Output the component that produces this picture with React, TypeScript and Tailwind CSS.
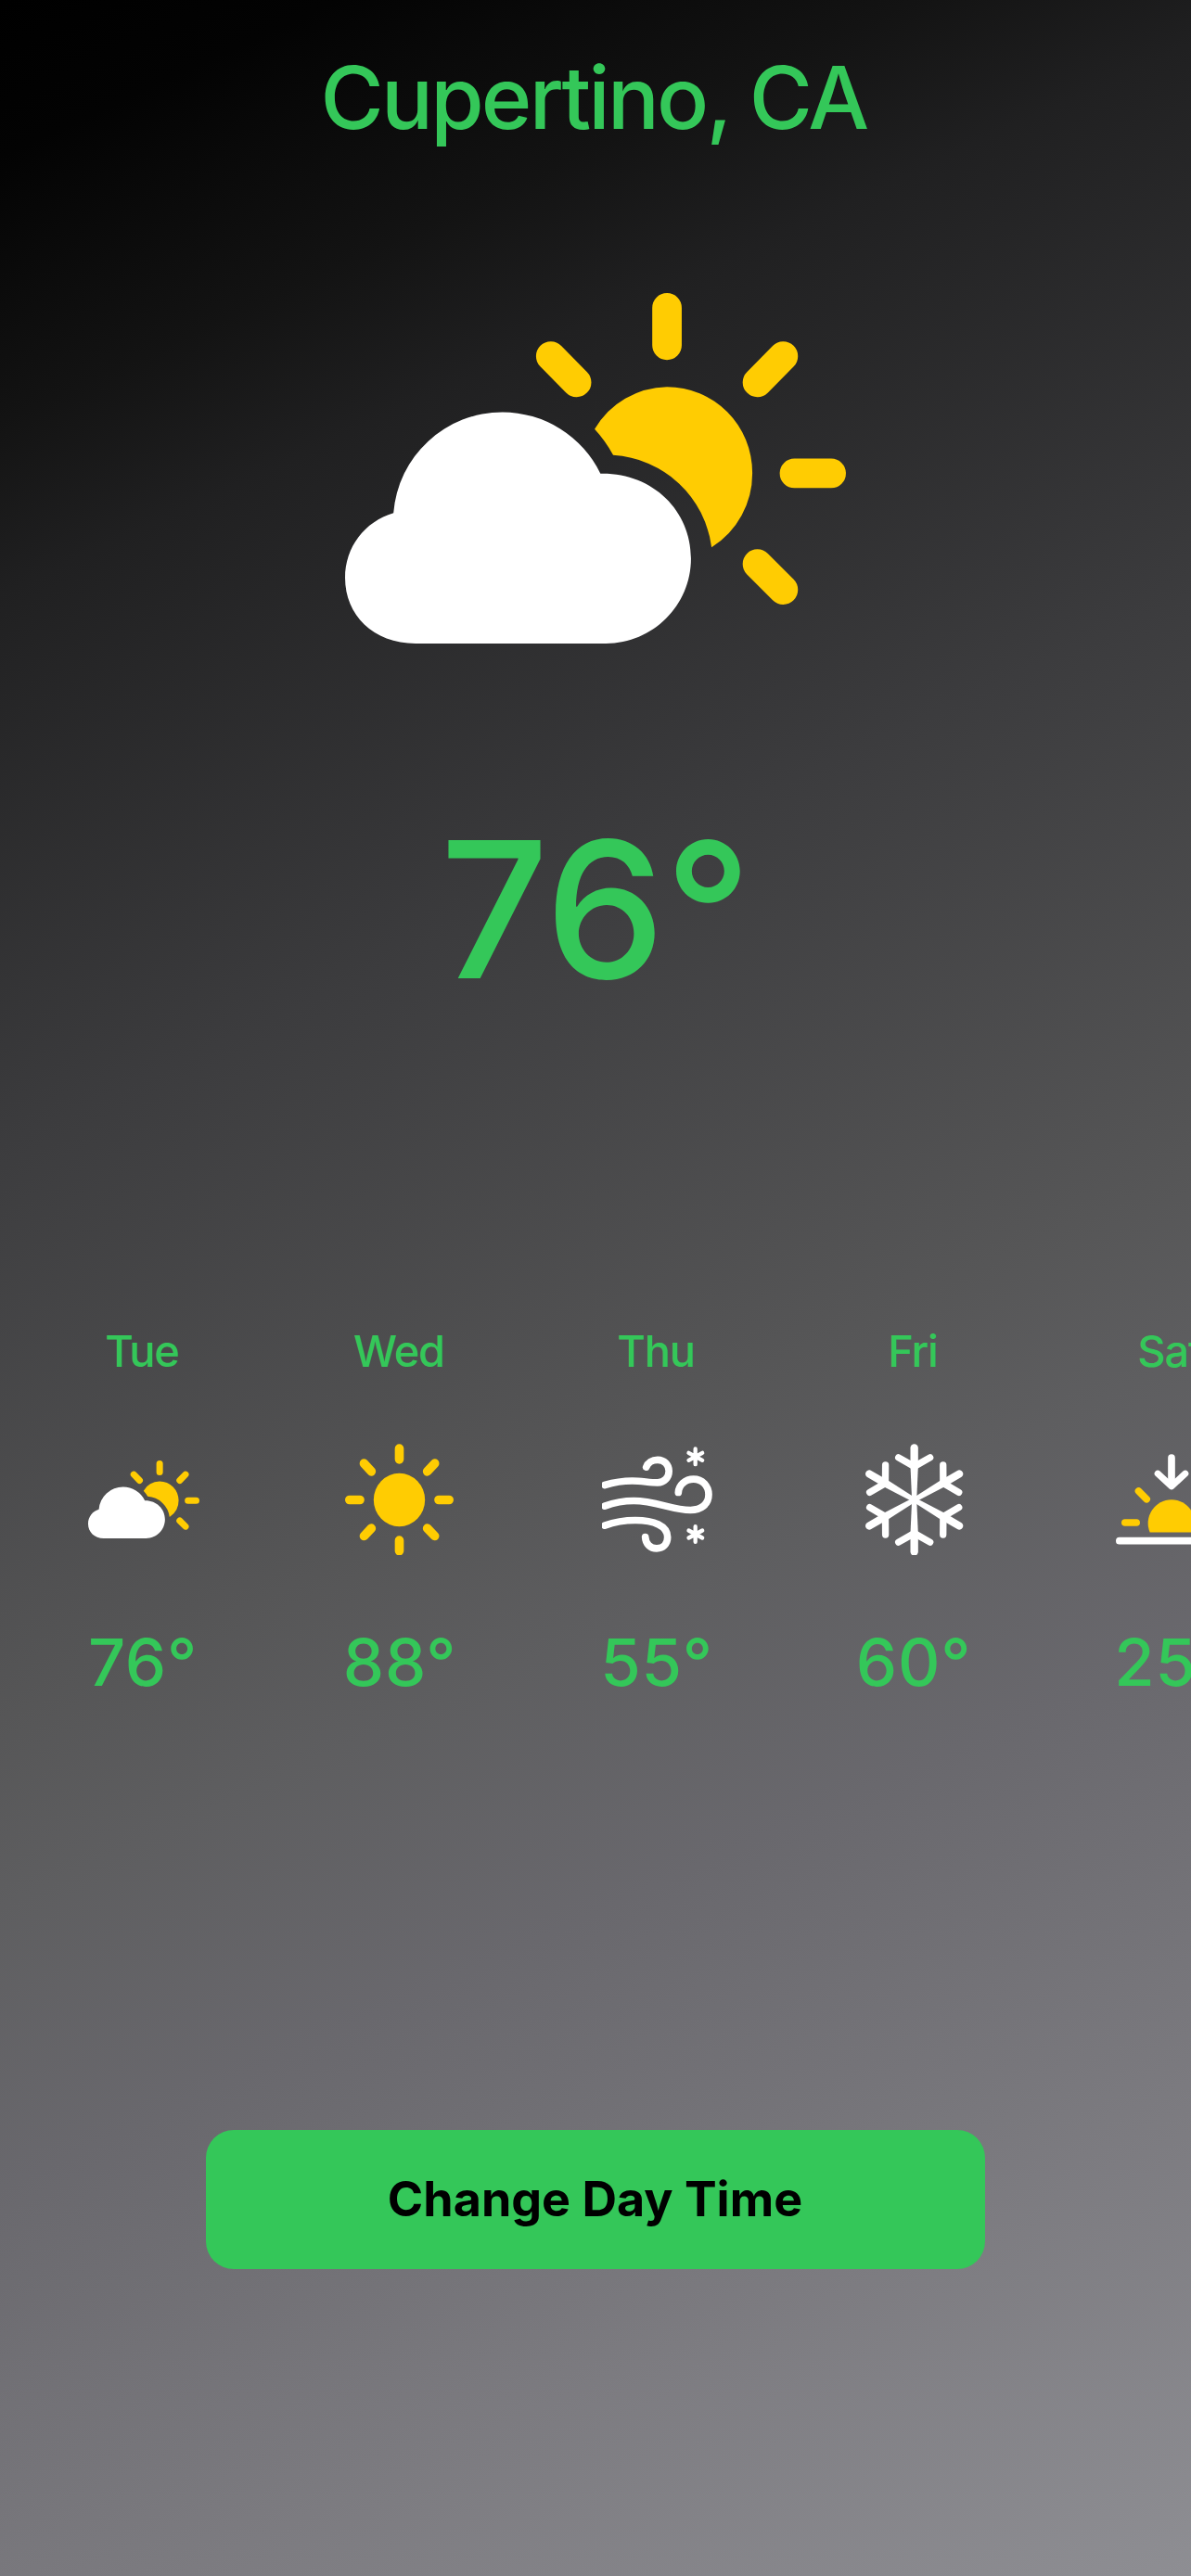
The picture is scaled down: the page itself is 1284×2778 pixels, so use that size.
import React from "react";

type Weather = "cloudSun" | "sun" | "windSnow" | "snow" | "sunset";

interface Day {
  name: string;
  weather: Weather;
  temperature: number;
}

const days: Day[] = [
  { name: "Tue", weather: "cloudSun", temperature: 76 },
  { name: "Wed", weather: "sun", temperature: 88 },
  { name: "Thu", weather: "windSnow", temperature: 55 },
  { name: "Fri", weather: "snow", temperature: 60 },
  { name: "Sat", weather: "sunset", temperature: 25 },
];

function CloudSunIcon({ className }: { className: string }) {
  return (
    <svg viewBox="21.8 15.7 540.5 378.4" className={className}>
      <g stroke="#ffcc02" strokeWidth="31.8" strokeLinecap="round">
        <path d="M369.2 31.6V72.1M506.8 210.3H546.4M494.6 83.9L466.8 112.1M243.8 83.9L271.6 112.1M466.8 308.2L494.6 336.1" />
      </g>
      <path
        fill="#ffcc02"
        d="M291.1 162.7A92.3 92.3 0 0 1 369.2 117A92.1 92.7 0 0 1 461.3 209.7A94 94 0 0 1 417.3 290.3A114 114 0 0 0 311.1 190.7A140 140 0 0 0 291.1 162.7Z"
      />
      <path
        fill="#fff"
        d="M98 394C52 394 21.8 363 21.8 323.3C21.8 290 43 262.5 74 253.3A118 118 0 0 1 191.6 144.3A118 118 0 0 1 297.4 210.7C353 209.5 395.1 250 395.1 302.3C395.1 353 354 394 303.4 394Z"
      />
    </svg>
  );
}

function SunIcon({ className }: { className: string }) {
  return (
    <svg viewBox="936 442.5 360 360" className={className}>
      <ellipse cx="1111.5" cy="624" rx="83" ry="86" fill="#ffcc02" />
      <path
        stroke="#ffcc02"
        strokeWidth="29"
        strokeLinecap="round"
        d="M1111.5 458V493M1111.5 755V789M950.5 624H984M1239 624H1272.5M997.5 506L1021 532M1226 506L1202 532M997.5 741L1021 716M1226 741L1202 716"
      />
    </svg>
  );
}

function WindSnowIcon({ className }: { className: string }) {
  return (
    <svg viewBox="57 52.5 360 360" className={className} fill="none" stroke="#fff" strokeLinecap="round">
      <g strokeWidth="23">
        <path d="M66 186C96 177 122 172.5 155 172.5C185 172.5 210 178 237 178C258 178 273.5 162 273.5 141C273.5 120 258 104.5 237 104.5C219 104.5 205 114 200 128" />
        <path d="M66 254C96 243 125 237 160 237C230 237 285 267 343 267C378 267 402 248 402 217C402 188 381 167 353 167C326 167 305 186 304 210" />
        <path d="M66 317C96 306 130 300 165 300C225 300 269 318 269 355C269 377 254 391 234 391C213 391 198 376 197 354" />
      </g>
      <path
        strokeWidth="13"
        d="M359 69V119M337.5 82L381.5 106M381.5 82L337.5 106M359 320V370M337.5 333L381.5 357M381.5 333L337.5 357"
      />
    </svg>
  );
}

function SnowIcon({ className }: { className: string }) {
  return (
    <svg viewBox="48 52.5 360 360" className={className} fill="none" stroke="#fff" strokeLinecap="round">
      {[0, 60, 120, 180, 240, 300].map((angle) => (
        <g key={angle} transform={`rotate(${angle} 227 234)`}>
          <path strokeWidth="25" d="M227 66V125" />
          <path strokeWidth="22" strokeLinejoin="round" d="M176 97L227 126L278 97" />
          <path stroke="none" fill="#fff" d="M214.5 125H239.5L234.5 236H219.5Z" />
        </g>
      ))}
    </svg>
  );
}

function SunsetIcon({ className }: { className: string }) {
  return (
    <svg viewBox="399 442.5 360 360" className={className} fill="none" strokeLinecap="round">
      <path stroke="#fff" strokeWidth="23" d="M579 488V570M410.5 756.5H747.5" />
      <path stroke="#fff" strokeWidth="21" strokeLinejoin="round" d="M534.5 539L579 580L623.5 539" />
      <path fill="#ffcc02" d="M509 729A76 76 0 1 1 649 729Z" />
      <path
        stroke="#ffcc02"
        strokeWidth="23"
        d="M428.5 697.5H465.5M472.5 595.5L498.5 621.5M692.5 697.5H729.5M685.5 595.5L659.5 621.5"
      />
    </svg>
  );
}

const icons: Record<Weather, (props: { className: string }) => React.JSX.Element> = {
  cloudSun: CloudSunIcon,
  sun: SunIcon,
  windSnow: WindSnowIcon,
  snow: SnowIcon,
  sunset: SunsetIcon,
};

function DayColumn({ day }: { day: Day }) {
  const Icon = icons[day.weather];
  return (
    <li className="flex w-[120px] shrink-0 flex-col items-center">
      <span className="pr-[4px] text-[47px] leading-[60px] font-medium tracking-[-1.2px] whitespace-nowrap">
        {day.name}
      </span>
      <Icon className="mt-[70px] h-[120px] w-[120px]" />
      <span className="mt-[71px] pr-[2px] text-[70.5px] leading-[90px] font-medium tracking-[0.8px] whitespace-nowrap">
        {day.temperature}°
      </span>
    </li>
  );
}

export default function App() {
  return (
    <main className="flex h-[2778px] w-[1284px] flex-col items-center overflow-hidden bg-[linear-gradient(155.2deg,#000000_0%,#030303_5%,#131313_13.5%,#202021_19%,#3c3c3e_36.6%,#565657_55%,#5e5e60_61%,#69686d_70%,#7c7b80_85%,#8e8e93_100%)] font-[Inter,sans-serif] text-[#34c759]">
      <h1 className="mt-[45px] pr-[4px] text-[93px] leading-[120px] font-medium tracking-[-2.8px] whitespace-nowrap">
        Cupertino, CA
      </h1>
      <CloudSunIcon className="mt-[151px] h-[378px] w-[540px]" />
      <p className="mt-[156px] text-[205px] leading-[260px] font-medium tracking-[-0.5px] whitespace-nowrap">76°</p>
      <ul className="mt-[317px] flex w-full gap-[157px] pl-[95px]">
        {days.map((day) => (
          <DayColumn key={day.name} day={day} />
        ))}
      </ul>
      <button className="mt-[459px] h-[150px] w-[840px] shrink-0 rounded-[30px] bg-[#34c759] pr-[1px] pb-px text-[52px] font-bold text-black">
        Change Day Time
      </button>
    </main>
  );
}
